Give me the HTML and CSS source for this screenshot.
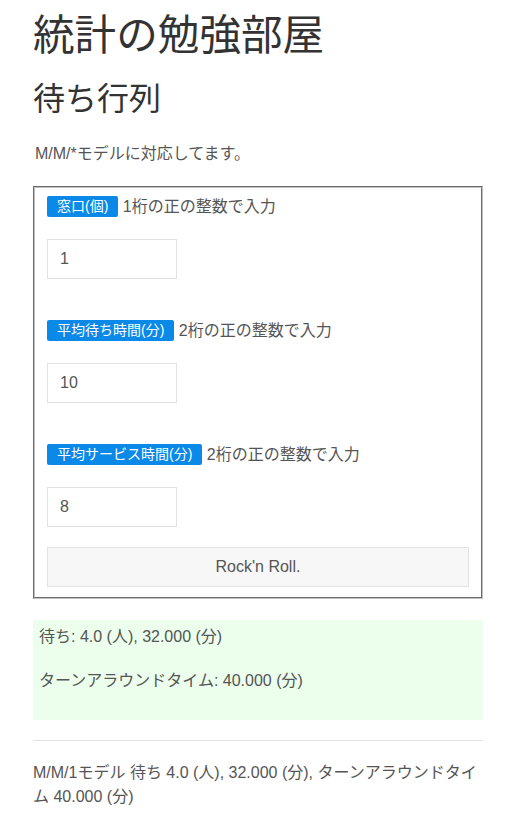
FILE: index.html
```html
<!DOCTYPE html>
<html lang="ja">
<head>
<meta charset="utf-8">
<title>統計の勉強部屋</title>
<link rel="stylesheet" href="styles.css">
</head>
<body>
<div class="page">
  <h1 class="site-title">統計の勉強部屋</h1>
  <h2 class="page-title">待ち行列</h2>
  <p class="intro">M/M/*モデルに対応してます。</p>

  <form class="queue-form">
    <fieldset class="fields">
      <div class="field">
        <p class="field-label"><span class="badge">窓口(個)</span> 1桁の正の整数で入力</p>
        <input class="num-input" type="text" value="1">
      </div>
      <div class="field">
        <p class="field-label"><span class="badge">平均待ち時間(分)</span> 2桁の正の整数で入力</p>
        <input class="num-input" type="text" value="10">
      </div>
      <div class="field field-last">
        <p class="field-label"><span class="badge">平均サービス時間(分)</span> 2桁の正の整数で入力</p>
        <input class="num-input" type="text" value="8">
      </div>
      <button class="submit" type="button">Rock'n Roll.</button>
    </fieldset>
  </form>

  <div class="result">
    <p class="result-line">待ち: 4.0 (人), 32.000 (分)</p>
    <p class="result-line">ターンアラウンドタイム: 40.000 (分)</p>
  </div>

  <hr class="divider">

  <p class="summary">M/M/1モデル 待ち 4.0 (人), 32.000 (分), ターンアラウンドタイム 40.000 (分)</p>
</div>
</body>
</html>
```

FILE: styles.css
```css
* { box-sizing: border-box; }

html, body {
  margin: 0;
  padding: 0;
  background: #ffffff;
}

body {
  font-family: "Liberation Sans", Arial, "Noto Sans CJK JP", sans-serif;
  font-size: 16px;
  line-height: 24px;
  color: #555555;
}

.page {
  width: 483px;
  padding-left: 33px;
}

.site-title {
  margin: 0;
  padding-top: 11px;
  font-size: 41.6px;
  line-height: 50px;
  font-weight: normal;
  color: #333333;
}

.page-title {
  margin: 18px 0 0;
  font-size: 32px;
  line-height: 40px;
  font-weight: normal;
  color: #333333;
}

.intro {
  margin: 23px 0 0 2px;
  font-size: 16px;
  line-height: 24px;
}

.queue-form {
  margin: 20px 0 0;
}

.fields {
  margin: 0;
  border: 2px groove #c0c0c0;
  padding: 7px 12px 10px;
  display: flex;
  flex-direction: column;
}

.field {
  display: flex;
  flex-direction: column;
  align-items: flex-start;
  margin-bottom: 40px;
}

.field-last {
  margin-bottom: 20px;
}

.field-label {
  margin: 0 0 20px;
  line-height: 24px;
}

.badge {
  display: inline-block;
  background: #0a89e8;
  color: #ffffff;
  font-size: 14px;
  line-height: 21px;
  padding: 0 10px;
  border-radius: 2px;
  vertical-align: top;
  margin-top: 1px;
}

.num-input {
  width: 130px;
  height: 40px;
  border: 1px solid #e2e2e2;
  padding: 0 12px;
  font-family: "Liberation Sans", Arial, sans-serif;
  font-size: 16px;
  color: #555555;
  background: #ffffff;
  outline: none;
}

.submit {
  width: 100%;
  height: 40px;
  border: 1px solid #e2e2e2;
  background: #f7f7f7;
  font-family: "Liberation Sans", Arial, sans-serif;
  font-size: 16px;
  color: #555555;
  padding: 0;
}

.result {
  margin-top: 21px;
  width: 450px;
  background: #ebffec;
  padding: 5px 6px 7px;
}

.result-line {
  margin: 0 0 20px;
}

.divider {
  margin: 20px 0 0;
  border: 0;
  border-top: 1px solid #e3e3e3;
  width: 450px;
}

.summary {
  margin: 20px 0 0;
  width: 450px;
}
```
